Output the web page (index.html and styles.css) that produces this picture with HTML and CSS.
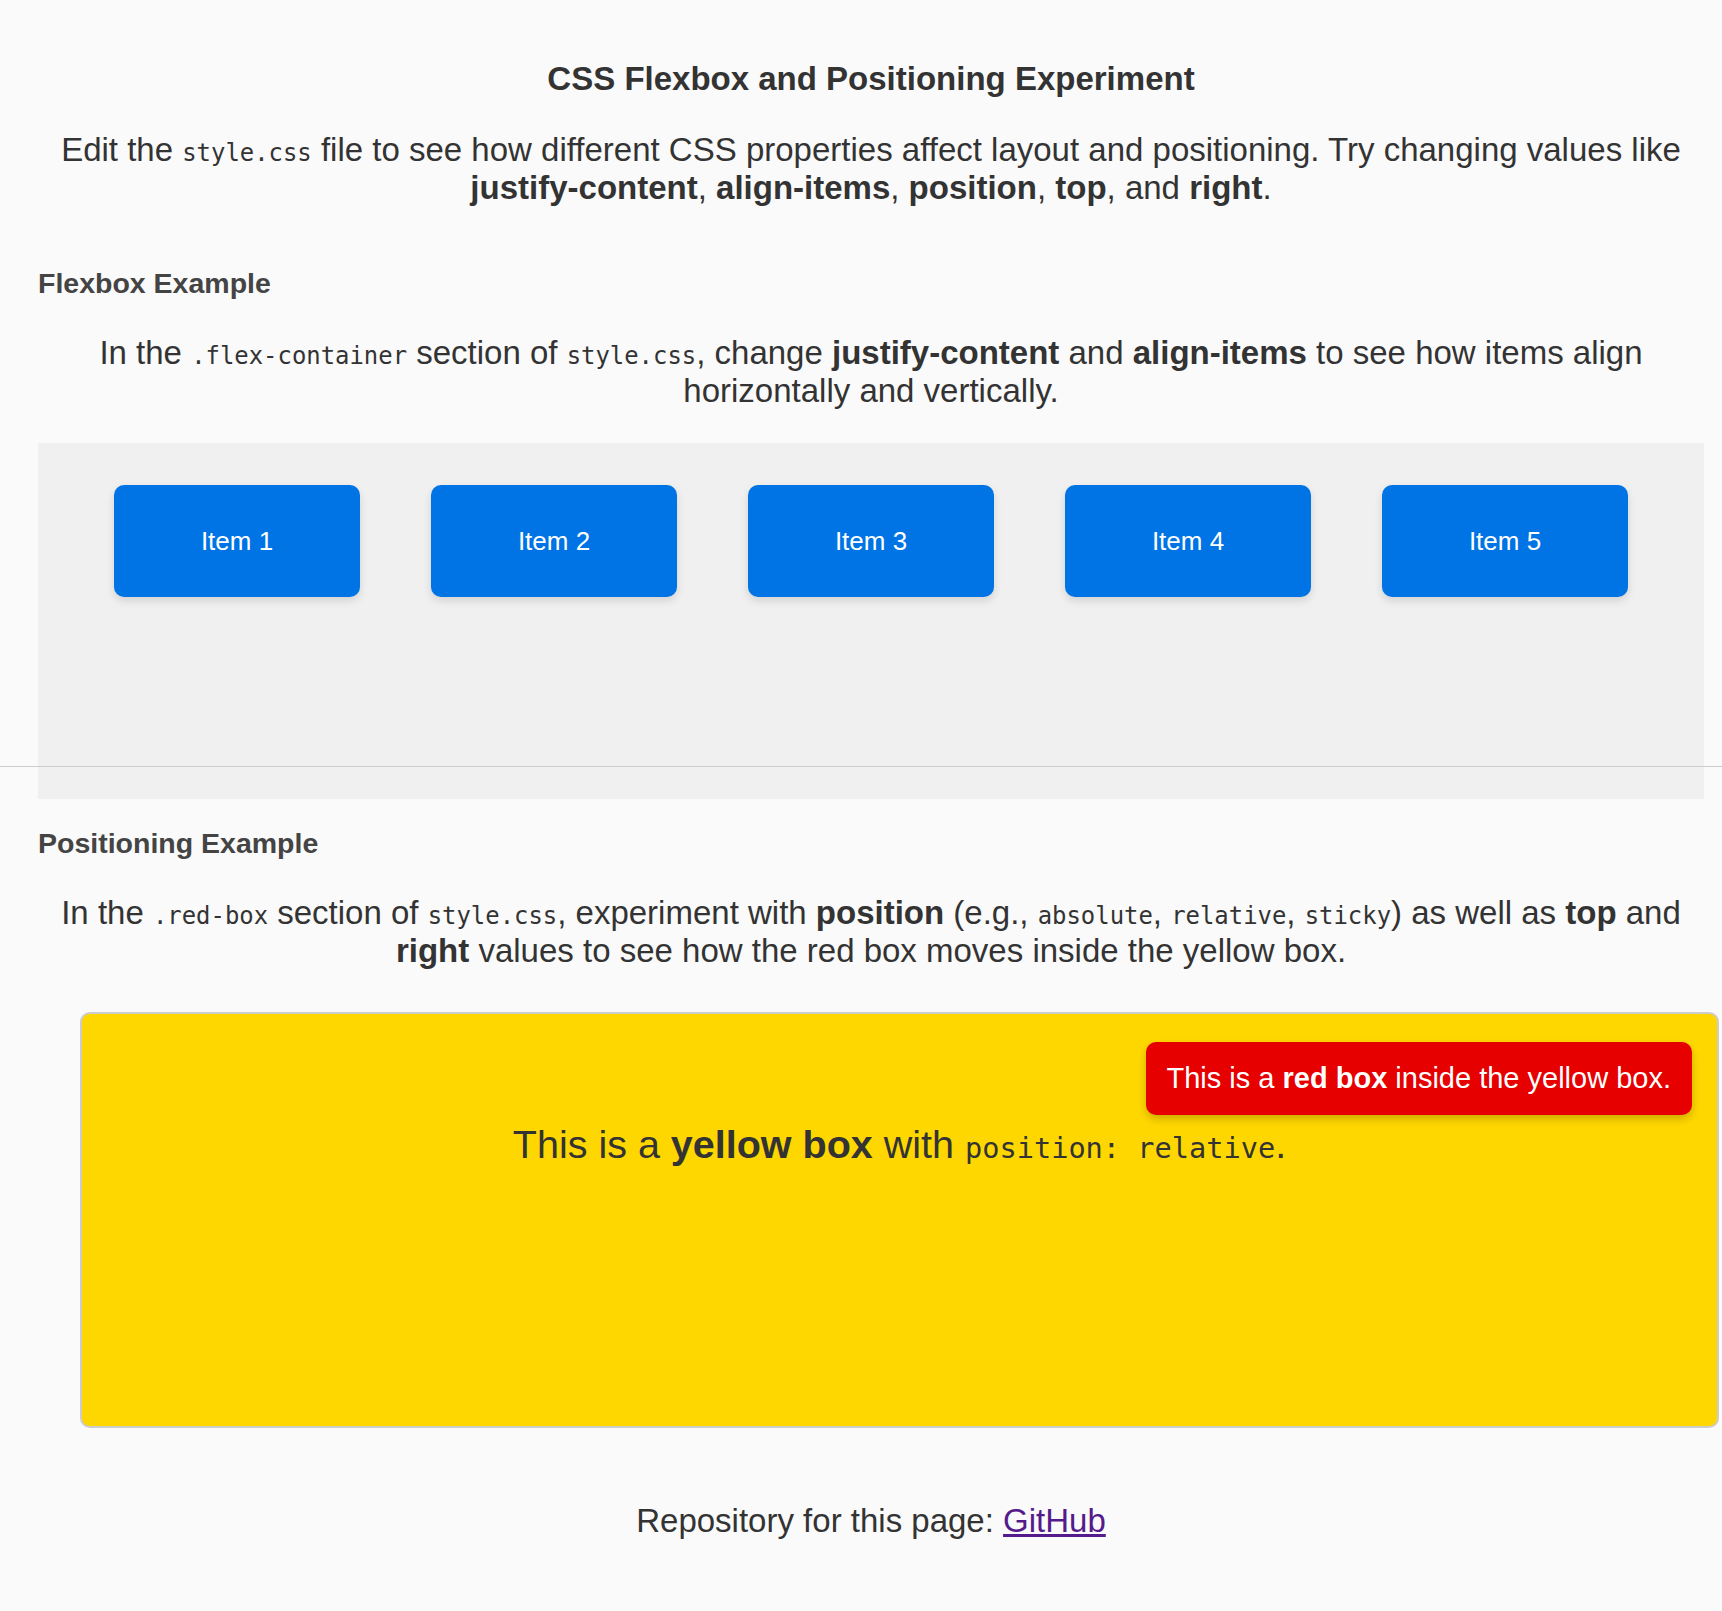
FILE: index.html
```html
<!DOCTYPE html>
<html lang="en">
<head>
<meta charset="utf-8">
<title>CSS Flexbox and Positioning Experiment</title>
<link rel="stylesheet" href="styles.css">
</head>
<body>
<div class="page">
  <header class="intro">
    <h1 class="title">CSS Flexbox and Positioning Experiment</h1>
    <p class="lead">Edit the <code>style.css</code> file to see how different CSS properties affect layout and positioning. Try changing values like <strong>justify-content</strong>, <strong>align-items</strong>, <strong>position</strong>, <strong>top</strong>, and <strong>right</strong>.</p>
  </header>

  <section class="demo">
    <h2 class="demo-title">Flexbox Example</h2>
    <p class="lead">In the <code>.flex-container</code> section of <code>style.css</code>, change <strong>justify-content</strong> and <strong>align-items</strong> to see how items align horizontally and vertically.</p>
    <div class="flex-container">
      <div class="flex-item">Item 1</div>
      <div class="flex-item">Item 2</div>
      <div class="flex-item">Item 3</div>
      <div class="flex-item">Item 4</div>
      <div class="flex-item">Item 5</div>
    </div>
  </section>

  <hr class="divider">

  <section class="demo">
    <h2 class="demo-title">Positioning Example</h2>
    <p class="lead">In the <code>.red-box</code> section of <code>style.css</code>, experiment with <strong>position</strong> (e.g., <code>absolute</code>, <code>relative</code>, <code>sticky</code>) as well as <strong>top</strong> and <strong>right</strong> values to see how the red box moves inside the yellow box.</p>
    <div class="yellow-box">
      <p class="yellow-text">This is a <strong>yellow box</strong> with <code>position: relative</code>.</p>
      <div class="red-box">This is a <strong>red box</strong> inside the yellow box.</div>
    </div>
  </section>

  <footer class="footer">
    <p class="footer-text">Repository for this page: <a class="repo-link" href="#">GitHub</a></p>
  </footer>
</div>
</body>
</html>
```

FILE: styles.css
```css
html, body {
  margin: 0;
  padding: 0;
}

body {
  background: #fafafa;
  color: #333333;
  font-family: "Liberation Sans", Arial, sans-serif;
  font-size: 33px;
  line-height: normal;
}

.page {
  padding: 60px 18px 40px 38px;
}

.title {
  margin: 0 0 33px;
  font-size: 33px;
  font-weight: bold;
  text-align: center;
  color: #333333;
}

.lead {
  margin: 0;
  text-align: center;
}

code {
  font-family: "DejaVu Sans Mono", "Liberation Mono", monospace;
  font-size: 0.725em;
  line-height: 1;
}

strong {
  font-weight: bold;
}

.demo-title {
  margin: 60px 0 34px;
  font-size: 28.5px;
  font-weight: bold;
  color: #444444;
}

.demo .lead {
  margin-bottom: 33px;
}

.flex-container {
  display: flex;
  justify-content: space-evenly;
  align-items: flex-start;
  height: 356px;
  box-sizing: border-box;
  padding: 42px 5px 0;
  background: #f0f0f0;
}

.flex-item {
  width: 246px;
  height: 112px;
  display: flex;
  align-items: center;
  justify-content: center;
  background: #0074e4;
  color: #ffffff;
  font-size: 26px;
  border-radius: 10px;
  box-shadow: 0 4px 8px rgba(0, 0, 0, 0.12);
}

.divider {
  height: 0;
  border: 0;
  border-top: 1px solid #cccccc;
  margin: -33px -18px 0 -38px;
}

.yellow-box {
  position: relative;
  box-sizing: border-box;
  height: 416px;
  margin: 42px -15px 0 42px;
  padding-top: 108px;
  background: #ffd700;
  border: 2px solid #cccccc;
  border-radius: 10px;
}

.yellow-text {
  margin: 0;
  text-align: center;
  font-size: 39.5px;
}

.red-box {
  position: absolute;
  top: 28px;
  right: 25px;
  padding: 20px 21px;
  background: #e60000;
  color: #ffffff;
  font-size: 29px;
  border-radius: 10px;
  box-shadow: 0 4px 8px rgba(0, 0, 0, 0.2);
}

.footer {
  margin-top: 74px;
}

.footer-text {
  margin: 0;
  text-align: center;
}

.repo-link {
  color: #551a8b;
  text-decoration: underline;
}
```
